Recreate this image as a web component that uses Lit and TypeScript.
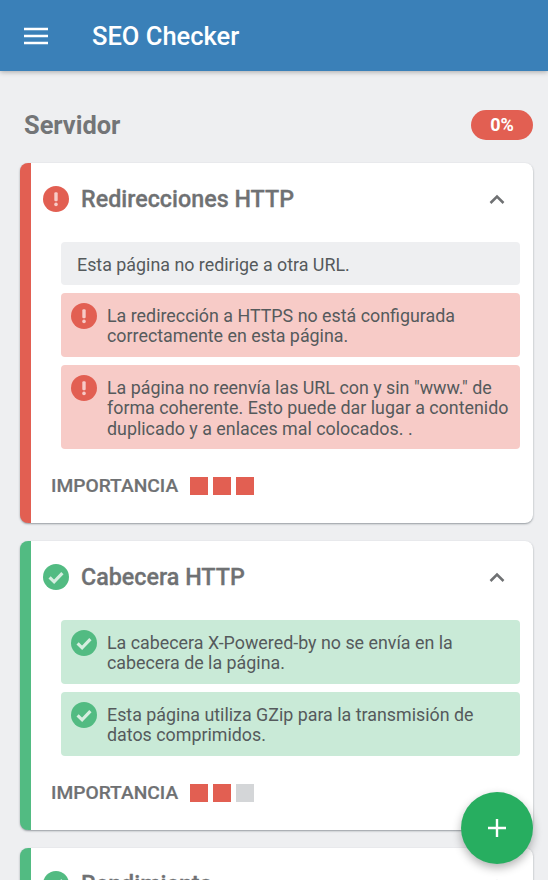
import { LitElement, html, css, svg } from "lit";
import { customElement, property } from "lit/decorators.js";
import { classMap } from "lit/directives/class-map.js";

const errorIcon = html`<svg class="icon" viewBox="0 0 26 26">
  <circle cx="13" cy="13" r="13" fill="#e25f52" />
  <rect x="11.3" y="6.2" width="3.4" height="9" rx="1.2" fill="#f7cbc7" />
  <circle cx="13" cy="18.4" r="1.8" fill="#f7cbc7" />
</svg>`;

const okIcon = html`<svg class="icon" viewBox="0 0 26 26">
  <circle cx="13" cy="13" r="13" fill="#52bb82" />
  ${svg`<path d="M6.6 13.4l4.5 4.4 8.3-8.6" fill="none" stroke="#d6eee0" stroke-width="3.2" />`}
</svg>`;

type Message = { kind: "info" | "error" | "ok"; text: string };

@customElement("audit-card")
export class AuditCard extends LitElement {
  @property() heading = "";
  @property() status: "error" | "ok" = "ok";
  @property({ type: Array }) messages: Message[] = [];
  @property({ type: Number }) importance = 0;

  static styles = css`
    :host {
      display: block;
    }
    .card {
      background: #fff;
      border-radius: 8px;
      border-left: 11px solid #52bb82;
      box-shadow: 0 1px 2px rgba(60, 70, 80, 0.5);
      padding-bottom: 28px;
    }
    .card.error {
      border-left-color: #e25f52;
    }
    .head {
      display: flex;
      align-items: center;
      height: 71px;
      padding: 0 27px 0 12px;
      margin-bottom: 8px;
    }
    .head .icon {
      margin-right: 12px;
    }
    .head h3 {
      flex: 1;
      margin: 0;
      font-size: 23.3px;
      font-weight: 500;
      color: #6f7173;
      -webkit-text-stroke: 0.3px #6f7173;
    }
    .chevron {
      width: 18px;
      height: 12px;
    }
    .messages {
      display: flex;
      flex-direction: column;
      gap: 8px;
      margin: 0 13px 0 30px;
    }
    .msg {
      display: flex;
      gap: 10px;
      padding: 12.5px 10px 10.5px;
      border-radius: 4px;
      font-size: 17.85px;
      line-height: 20.4px;
      color: #555a5c;
    }
    .msg.info {
      background: #eeeff1;
      padding-left: 16px;
    }
    .msg.error {
      background: #f7cbc7;
    }
    .msg.ok {
      background: #c9ead7;
    }
    .msg .icon {
      margin-top: -2.5px;
    }
    .icon {
      flex: none;
      width: 26px;
      height: 26px;
    }
    .importance {
      display: flex;
      align-items: center;
      gap: 5px;
      margin: 28px 0 0 20px;
      font-size: 19.2px;
      line-height: 18px;
      font-weight: 500;
      color: #6f7173;
      -webkit-text-stroke: 0.2px #6f7173;
    }
    .importance span {
      margin-right: 7px;
    }
    .importance i {
      width: 18px;
      height: 18px;
      background: #d4d6d8;
    }
    .importance i.on {
      background: #e25f52;
    }
  `;

  render() {
    return html`<div class=${classMap({ card: true, error: this.status === "error" })}>
      <div class="head">
        ${this.status === "error" ? errorIcon : okIcon}
        <h3>${this.heading}</h3>
        <svg class="chevron" viewBox="0 0 18 12">
          <path d="M2.5 10l6.5-6.5 6.5 6.5" fill="none" stroke="#6f7173" stroke-width="2.5" />
        </svg>
      </div>
      <div class="messages">
        ${this.messages.map(
          (m) => html`<div class="msg ${m.kind}">
            ${m.kind === "error" ? errorIcon : m.kind === "ok" ? okIcon : ""}
            <div>${m.text}</div>
          </div>`,
        )}
      </div>
      <div class="importance">
        <span>IMPORTANCIA</span>
        ${[0, 1, 2].map((i) => html`<i class=${i < this.importance ? "on" : ""}></i>`)}
      </div>
    </div>`;
  }
}

@customElement("app-root")
export class AppRoot extends LitElement {
  static styles = css`
    :host {
      display: block;
      height: 880px;
      overflow: hidden;
      position: relative;
      background: #eeeff1;
      font-family: Roboto, "Liberation Sans", sans-serif;
    }
    header {
      display: flex;
      align-items: center;
      box-sizing: border-box;
      height: 71px;
      padding: 1px 24px 0;
      background: #3a80b8;
      box-shadow: 0 1px 5px rgba(0, 0, 0, 0.3);
      color: #fff;
    }
    header svg {
      width: 24px;
      height: 18px;
      margin-right: 44px;
    }
    header h1 {
      margin: 0;
      font-size: 25.5px;
      font-weight: 500;
    }
    main {
      padding: 39px 15px 0 20px;
      display: flex;
      flex-direction: column;
      gap: 18px;
    }
    .section {
      display: flex;
      align-items: center;
      justify-content: space-between;
      height: 30px;
      margin-bottom: 5px;
      padding-left: 4px;
    }
    .section h2 {
      margin: 0;
      font-size: 25.4px;
      font-weight: 700;
      color: #737577;
    }
    .badge {
      width: 62px;
      height: 30px;
      line-height: 30px;
      border-radius: 15px;
      text-align: center;
      background: #e25f52;
      color: #fff;
      font-size: 18px;
      font-weight: 700;
    }
    .fab {
      position: absolute;
      left: 461px;
      top: 792px;
      width: 72px;
      height: 72px;
      border-radius: 50%;
      background: #27ae60;
      box-shadow: 0 4px 10px rgba(0, 0, 0, 0.3);
      display: flex;
      align-items: center;
      justify-content: center;
    }
    .fab svg {
      width: 18px;
      height: 18px;
    }
  `;

  render() {
    return html`
      <header>
        <svg viewBox="0 0 24 18">
          <path d="M0 2h24M0 9h24M0 16h24" stroke="#fff" stroke-width="2.4" />
        </svg>
        <h1>SEO Checker</h1>
      </header>
      <main>
        <div class="section">
          <h2>Servidor</h2>
          <div class="badge">0%</div>
        </div>
        <audit-card
          heading="Redirecciones HTTP"
          status="error"
          importance="3"
          .messages=${[
            { kind: "info", text: "Esta página no redirige a otra URL." },
            {
              kind: "error",
              text: "La redirección a HTTPS no está configurada correctamente en esta página.",
            },
            {
              kind: "error",
              text: 'La página no reenvía las URL con y sin "www." de forma coherente. Esto puede dar lugar a contenido duplicado y a enlaces mal colocados. .',
            },
          ]}
        ></audit-card>
        <audit-card
          heading="Cabecera HTTP"
          status="ok"
          importance="2"
          .messages=${[
            {
              kind: "ok",
              text: "La cabecera X-Powered-by no se envía en la cabecera de la página.",
            },
            {
              kind: "ok",
              text: "Esta página utiliza GZip para la transmisión de datos comprimidos.",
            },
          ]}
        ></audit-card>
        <audit-card heading="Rendimiento" status="ok"></audit-card>
      </main>
      <div class="fab">
        <svg viewBox="0 0 18 18">
          <path d="M9 0v18M0 9h18" stroke="#fff" stroke-width="2.4" />
        </svg>
      </div>
    `;
  }
}
